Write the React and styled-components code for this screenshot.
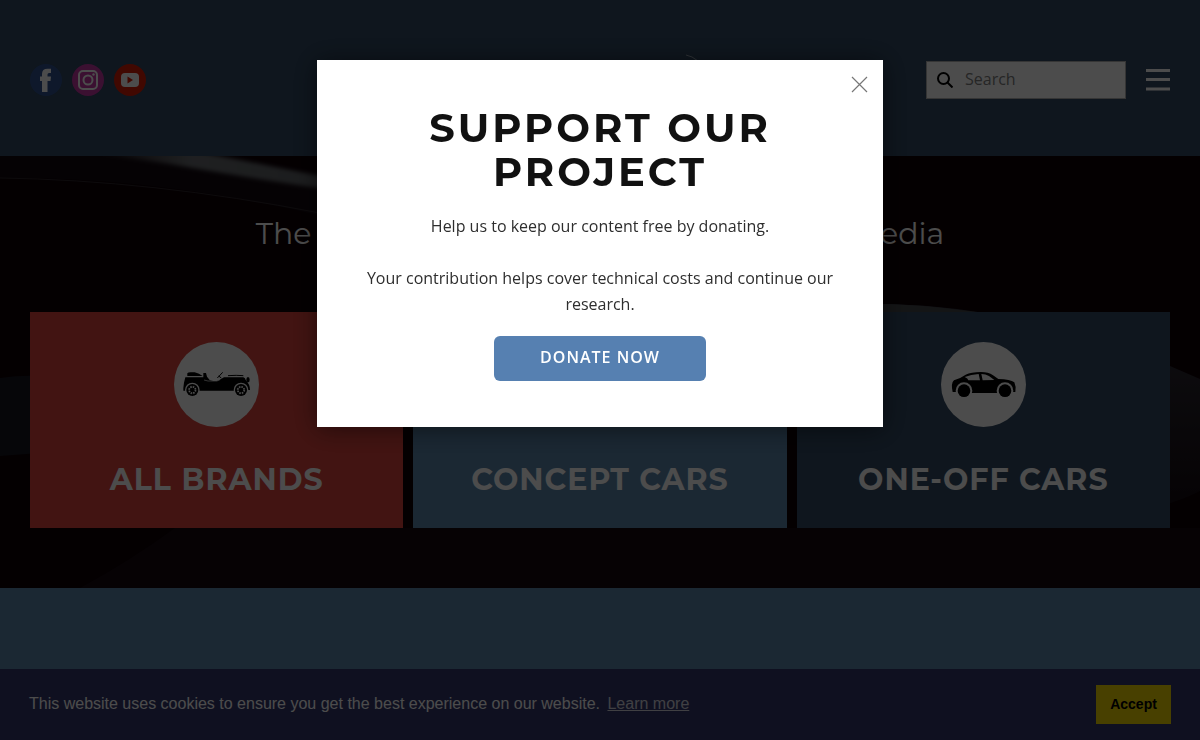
import React from "react";
import styled, { createGlobalStyle } from "styled-components";

const display = `Montserrat, Inter, "Open Sans", sans-serif`;
const body = `"Open Sans", "Noto Sans", sans-serif`;

const GlobalStyle = createGlobalStyle`
  *, *::before, *::after { box-sizing: border-box; }
  body {
    margin: 0;
    background: #5a85aa;
    color: #111;
    font-family: ${body};
    font-size: 16px;
    line-height: 26px;
  }
  h1, h2, p { margin: 0; }
  svg { display: block; }
`;

const Page = styled.div`
  min-height: 100vh;
  display: flex;
  flex-direction: column;
`;

const Header = styled.header`
  display: flex;
  align-items: center;
  justify-content: space-between;
  padding: 61px 30px 57px;
  background: #324a64;
`;

const Socials = styled.nav`
  display: flex;
  flex: 1;
  gap: 10px;
`;

const SocialLink = styled.a`
  width: 32px;
  height: 32px;
  border-radius: 50%;
  background: ${(p) => p.$color};
`;

const Logo = styled.svg`
  overflow: visible;
`;

const Tools = styled.div`
  display: flex;
  flex: 1;
  justify-content: flex-end;
  align-items: center;
  gap: 20px;
`;

const SearchForm = styled.form`
  display: flex;
  align-items: center;
  gap: 12px;
  width: 200px;
  height: 38px;
  padding: 0 10px;
  background: #fff;
  border: 1px solid #b3b3b3;
`;

const SearchInput = styled.input`
  flex: 1;
  min-width: 0;
  padding: 0 0 2px;
  border: 0;
  outline: 0;
  background: transparent;
  font: 16px/24px ${body};
  &::placeholder { color: #808080; opacity: 1; }
`;

const IconButton = styled.button`
  padding: 0;
  border: 0;
  background: transparent;
  cursor: pointer;
`;

const Hero = styled.main`
  position: relative;
  padding: 58px 30px 60px;
  background: #0e0006;
`;

const Backdrop = styled.svg`
  position: absolute;
  inset: 0;
  width: 100%;
  height: 100%;
`;

const HeroTitle = styled.h1`
  position: relative;
  margin-bottom: 58px;
  color: #fff;
  font: 400 30px/40px ${display};
  text-align: center;
`;

const Cards = styled.div`
  position: relative;
  display: grid;
  grid-template-columns: repeat(3, 1fr);
  gap: 10px;
`;

const Card = styled.a`
  display: flex;
  flex-direction: column;
  align-items: center;
  gap: 33px;
  padding: 30px 30px 28px;
  background: ${(p) => p.$color};
  color: #fff;
  text-decoration: none;
`;

const CardTitle = styled.h2`
  font: 700 30px/40px ${display};
  letter-spacing: 1px;
  text-transform: uppercase;
`;

const CookieBar = styled.aside`
  position: fixed;
  inset: auto 0 0;
  display: flex;
  align-items: center;
  justify-content: space-between;
  padding: 16px 29px;
  background: #32366b;
  color: #fff;
  font: 16px/24px "Liberation Sans", Arial, sans-serif;
`;

const CookieText = styled.p`
  padding-bottom: 2px;
`;

const CookieLink = styled.a`
  margin-left: 3px;
  color: inherit;
  opacity: 0.8;
`;

const AcceptButton = styled.button`
  width: 75px;
  height: 39px;
  padding: 0 0 2px;
  border: 0;
  background: #f1d600;
  color: #000;
  font: 700 14px/22px "Liberation Sans", Arial, sans-serif;
`;

const Overlay = styled.div`
  position: fixed;
  inset: 0;
  display: flex;
  justify-content: center;
  align-items: flex-start;
  padding: 60px 20px;
  background: rgba(0, 0, 0, 0.7);
`;

const Dialog = styled.section`
  position: relative;
  width: 100%;
  max-width: 566px;
  padding: 46px 40px;
  background: #fff;
  box-shadow: 0 2px 24px rgba(0, 0, 0, 0.5);
  text-align: center;
`;

const CloseButton = styled(IconButton)`
  position: absolute;
  top: 16px;
  right: 15px;
`;

const DialogTitle = styled.h2`
  font: 700 40px/44px ${display};
  letter-spacing: 3px;
  text-transform: uppercase;
`;

const DialogText = styled.p`
  margin: 19px 0;
  color: #2e2e2e;
`;

const DonateButton = styled.button`
  width: 212px;
  height: 45px;
  padding: 0 0 4px;
  border: 0;
  border-radius: 6px;
  background: #5680b1;
  color: #fff;
  font: 600 16px/26px ${body};
  letter-spacing: 1px;
  text-transform: uppercase;
`;

function Wheel({ x, y }) {
  return (
    <g>
      <circle cx={x} cy={y} r="22" fill="#fff" />
      <circle cx={x} cy={y} r="18" fill="#000" />
      <circle cx={x} cy={y} r="10" fill="none" stroke="#fff" strokeWidth="6" strokeDasharray="5 2.85" />
      <circle cx={x} cy={y} r="13.5" fill="none" stroke="#000" strokeWidth="2" />
    </g>
  );
}

function Roadster() {
  return (
    <svg width="85" height="85" viewBox="42 36 255 255" aria-hidden="true">
      <circle cx="169.500" cy="163.500" r="127.500" fill="#fff" />
      <path d="M82 138V130Q84 127 92 127H104Q118 130 128 138Z" />
      <path d="M76 142H130V129H138L141 140L149 150L160 153H170L178 150L192 142H250Q256 144 257 150Q270 163 270 180H262L222 182H118L70 182V174L72 158Z" />
      <path d="M132 150L144 153H171L180 149" fill="none" stroke="#fff" strokeWidth="2" />
      <path d="M172 144L188 127M176 138L184 144" fill="none" stroke="#000" strokeWidth="3" />
      <path d="M204 137Q230 135 250 137" fill="none" stroke="#000" strokeWidth="3" />
      <ellipse cx="264" cy="149" rx="5" ry="8" />
      <Wheel x={97} y={180} />
      <Wheel x={243} y={180} />
    </svg>
  );
}

function Coupe() {
  return (
    <svg width="85" height="85" viewBox="48 36 255 255" aria-hidden="true">
      <circle cx="175.500" cy="163.500" r="127.500" fill="#fff" />
      <path d="M83 186Q77 160 87 151Q108 144 122 134Q138 126 168 126Q190 126 204 136L220 147Q256 148 268 157Q274 170 271 186H262L240 189H117L92 186Z" />
      <path d="M119 141Q138 133 161 132L165 151H130Q129 145 119 141ZM169 132Q182 132 192 138L208 150L173 151Z" fill="#fff" />
      <circle cx="117" cy="182" r="25" fill="#fff" />
      <circle cx="240" cy="182" r="25" fill="#fff" />
      <circle cx="117" cy="182" r="19" />
      <circle cx="240" cy="182" r="19" />
    </svg>
  );
}

function HeroBackdrop() {
  return (
    <Backdrop viewBox="0 0 1200 432" preserveAspectRatio="xMidYMid slice" aria-hidden="true">
      <defs>
        <linearGradient id="streak" x1="0" y1="0" x2="1" y2="0">
          <stop offset="0" stopColor="#686b6f" stopOpacity="0" />
          <stop offset="0.400" stopColor="#686b6f" />
          <stop offset="1" stopColor="#5d6064" />
        </linearGradient>
        <linearGradient id="flank" x1="0" y1="0" x2="0" y2="1">
          <stop offset="0" stopColor="#34343e" />
          <stop offset="1" stopColor="#150a10" />
        </linearGradient>
        <filter id="soft" x="-10%" y="-50%" width="120%" height="200%">
          <feGaussianBlur stdDeviation="2" />
        </filter>
      </defs>
      <path d="M0 0H200L330 30V62Q160 20 0 22Z" fill="#130910" />
      <path d="M90 -4H200Q250 6 340 24V35Q260 24 170 8Z" fill="url(#streak)" filter="url(#soft)" />
      <path d="M0 22Q150 24 320 57" fill="none" stroke="#2c2429" strokeWidth="1" />
      <path d="M840 148Q920 146 985 157L1170 210L1200 223V335Q1180 345 1160 350L800 350Z" fill="url(#flank)" />
      <path d="M840 148Q910 146 976 156V200H840Z" fill="#45484b" />
      <path d="M0 222Q20 219 40 220V297L0 300Z" fill="#17151f" />
      <path d="M80 432Q130 405 175 372H1200V432Z" fill="#16080f" />
    </Backdrop>
  );
}

export default function App() {
  return (
    <>
      <GlobalStyle />
      <Page>
        <Header>
          <Socials aria-label="Social media">
            <SocialLink href="#facebook" aria-label="Facebook" $color="#315392">
              <svg width="32" height="32" viewBox="0 0 32 32" fill="#fff">
                <path d="M12 28V17H10V12.500H12V10Q12 4.800 17.500 4.800H21V9H19Q17.500 9 17.500 10.500V12.500H21L20.500 17H17.500V28Z" />
              </svg>
            </SocialLink>
            <SocialLink href="#instagram" aria-label="Instagram" $color="#c536a4">
              <svg width="32" height="32" viewBox="0 0 32 32" fill="none" stroke="#fff" strokeWidth="2">
                <rect x="7" y="7" width="18" height="18" rx="4" />
                <circle cx="16" cy="16" r="4.500" />
                <circle cx="21.500" cy="10.500" r="1.200" fill="#fff" stroke="none" />
              </svg>
            </SocialLink>
            <SocialLink href="#youtube" aria-label="YouTube" $color="#d91d06">
              <svg width="32" height="32" viewBox="0 0 32 32">
                <rect x="7" y="9" width="18" height="14" rx="4" fill="#fff" />
                <path d="M13.500 12.500V19.500L19 16Z" fill="#d91d06" />
              </svg>
            </SocialLink>
          </Socials>
          <Logo width="200" height="38" viewBox="0 0 200 38" fill="none" aria-hidden="true">
            <path d="M186 -6Q192 -5 198 0Q180 20 20 30" stroke="#fff" strokeOpacity="0.500" />
          </Logo>
          <Tools>
            <SearchForm role="search">
              <svg width="16" height="16" viewBox="0 0 16 16" fill="none" stroke="#000" strokeWidth="2" aria-hidden="true">
                <circle cx="6.500" cy="6.500" r="5.500" />
                <path d="M10.500 10.500L15.500 15.500" />
              </svg>
              <SearchInput type="search" placeholder="Search" aria-label="Search" />
            </SearchForm>
            <IconButton type="button" aria-label="Menu">
              <svg width="24" height="22" viewBox="0 0 24 22" fill="#fff">
                <path d="M0 0H24V3H0ZM0 9H24V12H0ZM0 18.500H24V21.500H0Z" />
              </svg>
            </IconButton>
          </Tools>
        </Header>
        <Hero>
          <HeroBackdrop />
          <HeroTitle>The World's Largest Automotive Encyclopedia</HeroTitle>
          <Cards>
            <Card href="#brands" $color="#dc433c">
              <Roadster />
              <CardTitle>All brands</CardTitle>
            </Card>
            <Card href="#concepts" $color="#5a85aa">
              <svg width="85" height="85" aria-hidden="true" />
              <CardTitle>Concept cars</CardTitle>
            </Card>
            <Card href="#one-offs" $color="#324a64">
              <Coupe />
              <CardTitle>One-off cars</CardTitle>
            </Card>
          </Cards>
        </Hero>
      </Page>
      <CookieBar aria-label="Cookie notice">
        <CookieText>
          This website uses cookies to ensure you get the best experience on our website.{" "}
          <CookieLink href="#cookies">Learn more</CookieLink>
        </CookieText>
        <AcceptButton type="button">Accept</AcceptButton>
      </CookieBar>
      <Overlay>
        <Dialog role="dialog" aria-modal="true" aria-labelledby="donate-title">
          <CloseButton type="button" aria-label="Close">
            <svg width="17" height="17" viewBox="0 0 17 17" fill="none" stroke="#777" strokeWidth="1.200">
              <path d="M1 1L16 16M16 1L1 16" />
            </svg>
          </CloseButton>
          <DialogTitle id="donate-title">Support our project</DialogTitle>
          <DialogText>
            Help us to keep our content free by donating.
            <br />
            <br />
            Your contribution helps cover technical costs and continue our research.
          </DialogText>
          <DonateButton type="button">Donate now</DonateButton>
        </Dialog>
      </Overlay>
    </>
  );
}
